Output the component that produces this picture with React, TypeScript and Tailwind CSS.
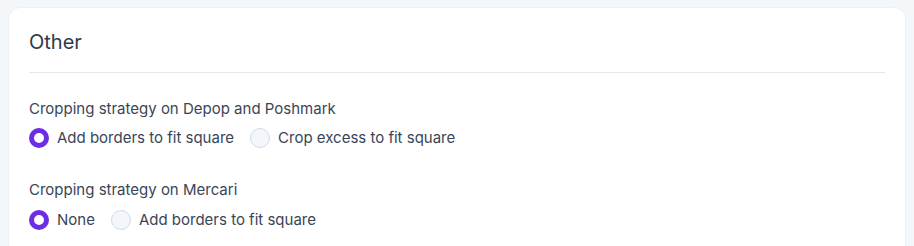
import React from "react";

function Radio({ checked, label }: { checked: boolean; label: string }) {
  return (
    <label className="flex items-center gap-2 cursor-pointer">
      <span
        className={
          checked
            ? "w-5 h-5 rounded-full border-[5px] border-[#6b2ee6] bg-white"
            : "w-5 h-5 rounded-full border border-[#d3dbe6] bg-[#f3f6fa]"
        }
      />
      <span className="text-[15px] leading-5 text-[#3a4556]">{label}</span>
    </label>
  );
}

export default function App() {
  return (
    <div
      className="min-h-[246px] bg-[#f4f7fa] px-[8px] pt-[7px]"
      style={{ fontFamily: "Inter, 'Noto Sans', sans-serif" }}
    >
      <div className="rounded-xl border border-[#edf1f5] bg-white px-5 pt-5 pb-6 h-[260px]">
        <h2 className="text-xl leading-7 text-[#2f3a4b]">Other</h2>
        <div className="mt-4 h-px bg-[#e3e8ef]" />
        <div className="pt-[26px]">
          <div className="text-[15px] leading-5 text-[#3a4556]">
            Cropping strategy on Depop and Poshmark
          </div>
          <div className="mt-[9px] flex items-center gap-4">
            <Radio checked label="Add borders to fit square" />
            <Radio checked={false} label="Crop excess to fit square" />
          </div>
        </div>
        <div className="pt-[32px]">
          <div className="text-[15px] leading-5 text-[#3a4556]">
            Cropping strategy on Mercari
          </div>
          <div className="mt-[10px] flex items-center gap-4">
            <Radio checked label="None" />
            <Radio checked={false} label="Add borders to fit square" />
          </div>
        </div>
      </div>
    </div>
  );
}
